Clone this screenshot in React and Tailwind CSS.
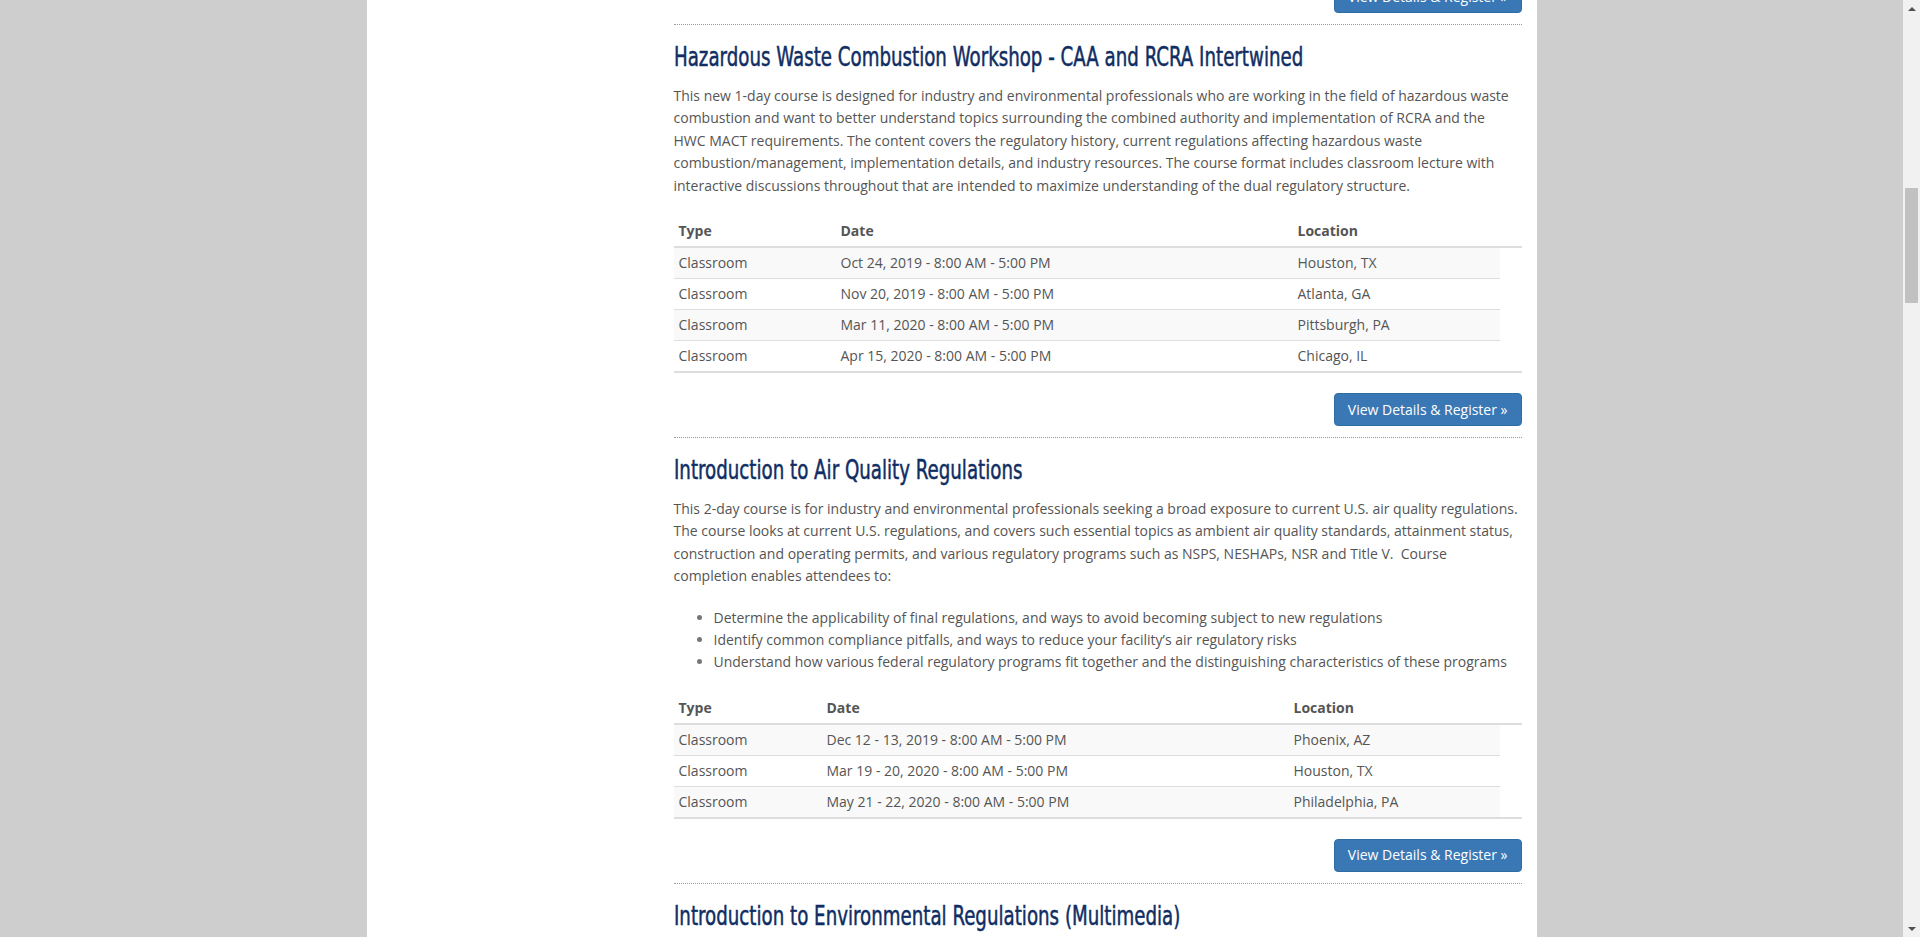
import React from 'react';

const body = { fontFamily: '"Open Sans", Lato, "Liberation Sans", sans-serif' };
const head = { fontFamily: '"DejaVu Sans Condensed", "DejaVu Sans", "Liberation Sans", sans-serif' };

const courses = [
  {
    id: 1,
    title: 'Hazardous Waste Combustion Workshop - CAA and RCRA Intertwined',
    lines: [
      'This new 1-day course is designed for industry and environmental professionals who are working in the field of hazardous waste',
      'combustion and want to better understand topics surrounding the combined authority and implementation of RCRA and the',
      'HWC MACT requirements. The content covers the regulatory history, current regulations affecting hazardous waste',
      'combustion/management, implementation details, and industry resources. The course format includes classroom lecture with',
      'interactive discussions throughout that are intended to maximize understanding of the dual regulatory structure.',
    ],
    bullets: [],
    cols: ['162px', '457px', '207px', '22px'],
    sessions: [
      ['Oct 24, 2019 - 8:00 AM - 5:00 PM', 'Houston, TX'],
      ['Nov 20, 2019 - 8:00 AM - 5:00 PM', 'Atlanta, GA'],
      ['Mar 11, 2020 - 8:00 AM - 5:00 PM', 'Pittsburgh, PA'],
      ['Apr 15, 2020 - 8:00 AM - 5:00 PM', 'Chicago, IL'],
    ],
  },
  {
    id: 2,
    title: 'Introduction to Air Quality Regulations',
    lines: [
      'This 2-day course is for industry and environmental professionals seeking a broad exposure to current U.S. air quality regulations.',
      'The course looks at current U.S. regulations, and covers such essential topics as ambient air quality standards, attainment status,',
      'construction and operating permits, and various regulatory programs such as NSPS, NESHAPs, NSR and Title V.\u00a0 Course',
      'completion enables attendees to:',
    ],
    bullets: [
      'Determine the applicability of final regulations, and ways to avoid becoming subject to new regulations',
      'Identify common compliance pitfalls, and ways to reduce your facility\u2019s air regulatory risks',
      'Understand how various federal regulatory programs fit together and the distinguishing characteristics of these programs',
    ],
    cols: ['148px', '467px', '211px', '22px'],
    sessions: [
      ['Dec 12 - 13, 2019 - 8:00 AM - 5:00 PM', 'Phoenix, AZ'],
      ['Mar 19 - 20, 2020 - 8:00 AM - 5:00 PM', 'Houston, TX'],
      ['May 21 - 22, 2020 - 8:00 AM - 5:00 PM', 'Philadelphia, PA'],
    ],
  },
];

const RegisterButton = ({ className = '' }) => (
  <div className={`flex justify-end ${className}`}>
    <button className="h-[33px] px-[13px] rounded-[4px] border border-[#2e6da4] bg-[#3a77b5] text-white text-[14px] leading-[20px]">
      View Details &amp; Register &raquo;
    </button>
  </div>
);

const Divider = () => <div className="mt-[11px] border-t border-dotted border-[#9a9a9a]" />;

// condensed display face squeezed to the narrow heading font of the page
const Heading = ({ children }) => (
  <h2
    className="mt-[16px] h-[32px] leading-[32px] text-[27px] font-normal text-[#102e63] whitespace-nowrap origin-left scale-x-[0.75] [-webkit-text-stroke:0.5px_#102e63]"
    style={head}
  >
    {children}
  </h2>
);

const Course = ({ course }) => (
  <div>
    <Heading>{course.title}</Heading>
    <p className="mt-[12px] mb-[19px] text-[14px] leading-[22.4px] text-[#555]">
      {course.lines.map((line, i) => (
        <React.Fragment key={i}>
          {line}
          {i < course.lines.length - 1 && <br />}
        </React.Fragment>
      ))}
    </p>
    {course.bullets.length > 0 && (
      <ul className="mb-[19px] pl-[40px] list-disc text-[14px] leading-[22.4px] text-[#555] marker:text-[#777]">
        {course.bullets.map((b) => (
          <li key={b}>{b}</li>
        ))}
      </ul>
    )}
    <div className="border-b-2 border-[#ddd]">
      <table className="w-full table-fixed border-collapse text-[14px] leading-[20px] text-[#555]">
        <colgroup>
          {course.cols.map((w, i) => (
            <col key={i} style={{ width: w }} />
          ))}
        </colgroup>
        <thead>
          <tr>
            <th className="px-[5px] py-[5px] text-left font-bold border-b-2 border-[#ddd]">Type</th>
            <th className="px-[5px] py-[5px] text-left font-bold border-b-2 border-[#ddd]">Date</th>
            <th className="px-[5px] py-[5px] text-left font-bold border-b-2 border-[#ddd]">Location</th>
            <th className="border-b-2 border-[#ddd]"></th>
          </tr>
        </thead>
        <tbody>
          {course.sessions.map(([date, loc], i) => (
            <tr key={date} className={i % 2 === 0 ? 'bg-[#f9f9f9]' : ''}>
              <td className="px-[5px] py-[5px] border-t border-[#ddd]">Classroom</td>
              <td className="px-[5px] py-[5px] border-t border-[#ddd]">{date}</td>
              <td className="px-[5px] py-[5px] border-t border-[#ddd]">{loc}</td>
            </tr>
          ))}
        </tbody>
      </table>
    </div>
    <RegisterButton className="mt-[20px]" />
    <Divider />
  </div>
);

export default function App() {
  return (
    <div className="flex h-[937px] w-full overflow-hidden" style={body}>
      <div className="flex-1 bg-[#cecece] overflow-hidden">
        <div className="mx-auto flex w-[1170px] h-full bg-white">
          <div className="w-[307px] shrink-0" />
          <div className="w-[848px] shrink-0">
            <RegisterButton className="-mt-[20px]" />
            <Divider />
            {courses.map((c) => (
              <Course key={c.id} course={c} />
            ))}
            <Heading>Introduction to Environmental Regulations (Multimedia)</Heading>
          </div>
        </div>
      </div>
      {/* scrollbar */}
      <div className="w-[17px] shrink-0 flex flex-col bg-[#f1f1f1]">
        <div className="h-[17px] flex items-center justify-center">
          <div className="w-0 h-0 border-l-[4px] border-r-[4px] border-b-[4px] border-l-transparent border-r-transparent border-b-[#505050]" />
        </div>
        <div className="flex-1 px-[2px]">
          <div className="mt-[171px] h-[115px] bg-[#c1c1c1]" />
        </div>
        <div className="h-[17px] flex items-center justify-center">
          <div className="w-0 h-0 border-l-[4px] border-r-[4px] border-t-[4px] border-l-transparent border-r-transparent border-t-[#505050]" />
        </div>
      </div>
    </div>
  );
}
